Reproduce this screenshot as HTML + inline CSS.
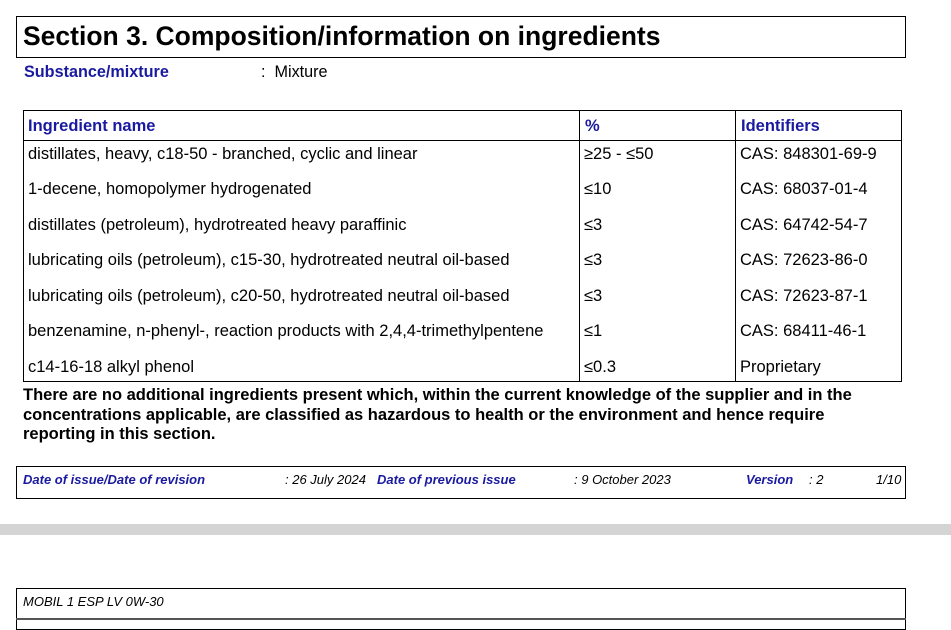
<html><head><style>
body{margin:0;width:951px;height:623px;background:#fff;position:relative;overflow:hidden;font-family:"Liberation Sans",Arial,sans-serif;color:#000}
.a{position:absolute;white-space:nowrap}
.b{color:#1a1aa0;font-weight:bold}
.i{font-style:italic;font-size:13px}
.r{font-size:16.5px}
</style></head><body>
<div class="a" style="left:16px;top:16px;width:888px;height:40px;border:1px solid #000"></div>
<div class="a" style="left:23px;top:21px;font-size:26.5px;font-weight:bold">Section 3. Composition/information on ingredients</div>
<div class="a b" style="left:24px;top:63px;font-size:16.2px">Substance/mixture</div>
<div class="a" style="left:261px;top:63px;font-size:16.2px">:&nbsp; Mixture</div>

<div class="a" style="left:23px;top:110px;width:877px;height:270px;border:1px solid #000"></div>
<div class="a" style="left:23px;top:140px;width:878px;height:1px;background:#000"></div>
<div class="a" style="left:579px;top:110px;width:1px;height:271px;background:#000"></div>
<div class="a" style="left:735px;top:110px;width:1px;height:271px;background:#000"></div>
<div class="a b r" style="left:28px;top:117px">Ingredient name</div>
<div class="a b r" style="left:585px;top:117px">%</div>
<div class="a b r" style="left:741px;top:117px">Identifiers</div>
<div class="r">
<div class="a" style="left:28px;top:145px">distillates, heavy, c18-50 - branched, cyclic and linear</div><div class="a" style="left:584px;top:145px">≥25 - ≤50</div><div class="a" style="left:740px;top:145px">CAS: 848301-69-9</div>
<div class="a" style="left:28px;top:180px">1-decene, homopolymer hydrogenated</div><div class="a" style="left:584px;top:180px">≤10</div><div class="a" style="left:740px;top:180px">CAS: 68037-01-4</div>
<div class="a" style="left:28px;top:216px">distillates (petroleum), hydrotreated heavy paraffinic</div><div class="a" style="left:584px;top:216px">≤3</div><div class="a" style="left:740px;top:216px">CAS: 64742-54-7</div>
<div class="a" style="left:28px;top:251px">lubricating oils (petroleum), c15-30, hydrotreated neutral oil-based</div><div class="a" style="left:584px;top:251px">≤3</div><div class="a" style="left:740px;top:251px">CAS: 72623-86-0</div>
<div class="a" style="left:28px;top:287px">lubricating oils (petroleum), c20-50, hydrotreated neutral oil-based</div><div class="a" style="left:584px;top:287px">≤3</div><div class="a" style="left:740px;top:287px">CAS: 72623-87-1</div>
<div class="a" style="left:28px;top:322px">benzenamine, n-phenyl-, reaction products with 2,4,4-trimethylpentene</div><div class="a" style="left:584px;top:322px">≤1</div><div class="a" style="left:740px;top:322px">CAS: 68411-46-1</div>
<div class="a" style="left:28px;top:358px">c14-16-18 alkyl phenol</div><div class="a" style="left:584px;top:358px">≤0.3</div><div class="a" style="left:740px;top:358px">Proprietary</div>
</div>
<div class="a" style="left:23px;top:386px;font-size:16.5px;font-weight:bold;line-height:19.5px">There are no additional ingredients present which, within the current knowledge of the supplier and in the<br>concentrations applicable, are classified as hazardous to health or the environment and hence require<br>reporting in this section.</div>

<div class="a" style="left:16px;top:466px;width:888px;height:31px;border:1px solid #000;border-bottom-width:1.5px"></div>
<div class="a i b" style="left:23px;top:472px">Date of issue/Date of revision</div>
<div class="a i" style="left:285px;top:472px">: 26 July 2024</div>
<div class="a i b" style="left:377px;top:472px">Date of previous issue</div>
<div class="a i" style="left:574px;top:472px">: 9 October 2023</div>
<div class="a i b" style="left:746px;top:472px">Version</div>
<div class="a i" style="left:809px;top:472px">: 2</div>
<div class="a i" style="left:876px;top:472px">1/10</div>

<div class="a" style="left:0;top:524px;width:951px;height:11px;background:#d4d4d4"></div>

<div class="a" style="left:16px;top:588px;width:888px;height:40px;border:1px solid #000"></div>
<div class="a" style="left:16px;top:618px;width:890px;height:2px;background:#555"></div>
<div class="a i" style="left:23px;top:594px">MOBIL 1 ESP LV 0W-30</div>
</body></html>
